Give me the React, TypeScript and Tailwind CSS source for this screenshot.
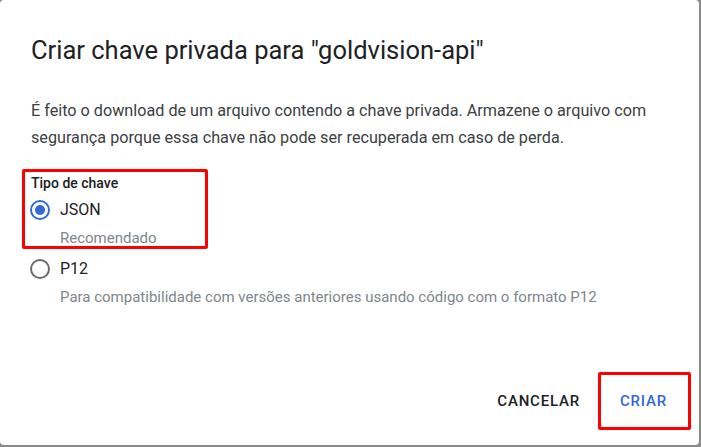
import React from "react";

function Radio({ checked }: { checked?: boolean }) {
  return (
    <span
      className={
        "flex h-[20px] w-[20px] shrink-0 items-center justify-center rounded-full border-2 " +
        (checked ? "border-[#3367d6]" : "border-[#6b6b6b]")
      }
    >
      {checked && <span className="h-[10px] w-[10px] rounded-full bg-[#3367d6]" />}
    </span>
  );
}

export default function App() {
  return (
    <div
      className="h-[447px] w-[701px] overflow-hidden bg-[#8a8a8a]"
      style={{ fontFamily: "Roboto, 'Liberation Sans', sans-serif" }}
    >
      <div className="relative flex h-[445px] w-[699px] flex-col rounded-[4px] bg-white text-[#202124]">
        <div className="pl-[31px] pt-[34px] text-[25.5px] leading-[32px]">
          Criar chave privada para "goldvision-api"
        </div>

        <p className="mt-[31px] w-[670px] pl-[31px] text-[16.2px] leading-[27px] text-[#3c4043]">
          É feito o download de um arquivo contendo a chave privada. Armazene o arquivo com
          segurança porque essa chave não pode ser recuperada em caso de perda.
        </p>

        <div className="mt-[23px] pl-[31px] text-[14px] font-medium leading-[18px]">Tipo de chave</div>

        <div className="mt-[6px] flex items-center gap-[10px] pl-[30px]">
          <Radio checked />
          <span className="text-[16px] leading-[24px]">JSON</span>
        </div>
        <div className="mt-[6px] pl-[60px] text-[15px] leading-[20px] text-[#80868b]">Recomendado</div>

        <div className="mt-[9px] flex items-center gap-[10px] pl-[30px]">
          <Radio />
          <span className="text-[16px] leading-[24px]">P12</span>
        </div>
        <div className="mt-[6px] pl-[60px] text-[15px] leading-[20px] text-[#80868b]">
          Para compatibilidade com versões anteriores usando código com o formato P12
        </div>

        <div className="mt-auto flex justify-end gap-[8px] pb-[25px] pr-[16px]">
          <button className="px-[16px] py-[9px] text-[15px] font-medium leading-[20px] tracking-[0.8px] text-[#202124]">
            CANCELAR
          </button>
          <button className="px-[16px] py-[9px] text-[15px] font-medium leading-[20px] tracking-[0.8px] text-[#3367d6]">
            CRIAR
          </button>
        </div>

        <div className="pointer-events-none absolute left-[22px] top-[169px] h-[80px] w-[186px] rounded-[2px] border-[3px] border-[#ff0000]" />
        <div className="pointer-events-none absolute left-[598px] top-[372px] h-[58px] w-[93px] rounded-[2px] border-[3px] border-[#ff0000]" />
      </div>
    </div>
  );
}
